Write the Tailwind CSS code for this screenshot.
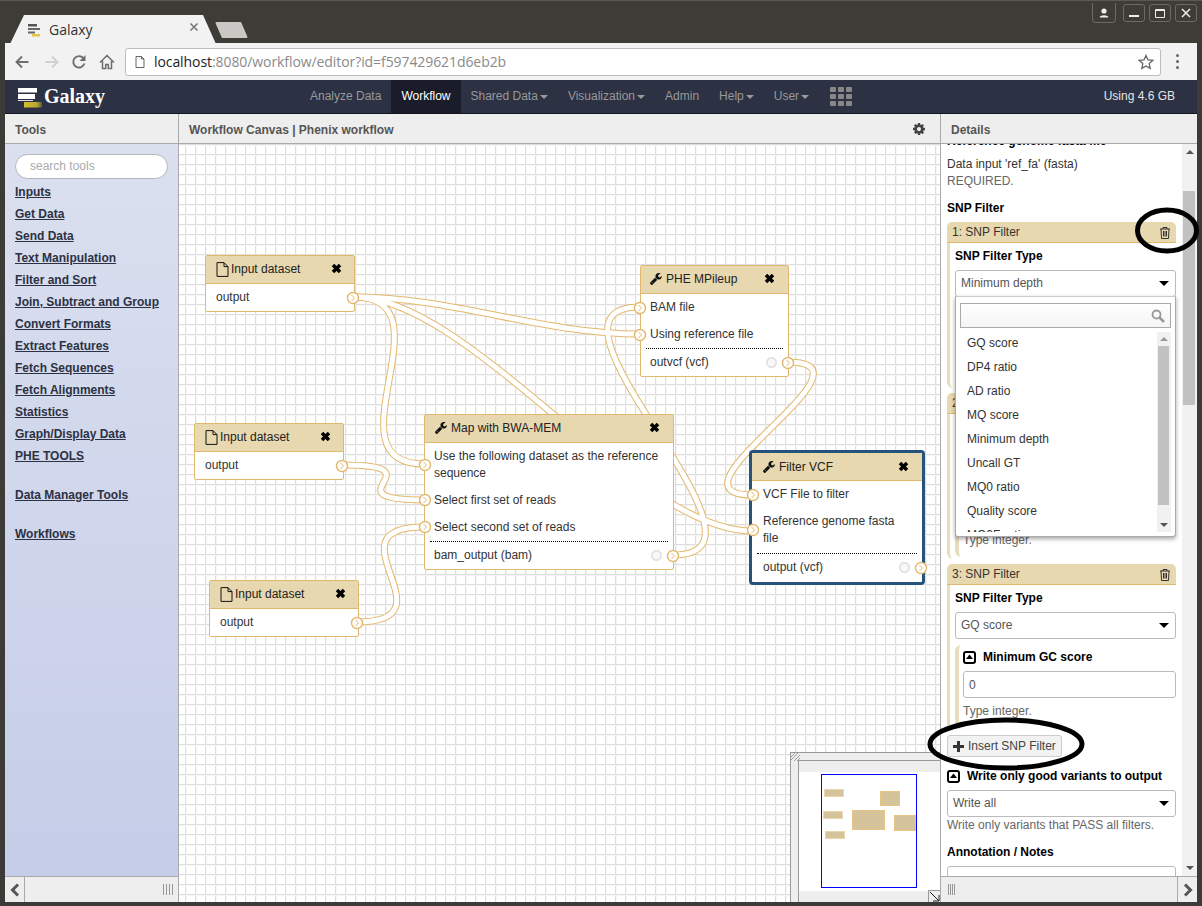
<!doctype html>
<html>
<head>
<meta charset="utf-8">
<title>Galaxy</title>
<script src="https://cdn.jsdelivr.net/npm/@tailwindcss/browser@4"></script>
</head>
<body class="m-0 overflow-hidden bg-[#3c3b37] font-['Liberation_Sans',Arial,sans-serif] text-[12px] leading-[17px] text-[#333]">
<div class="relative w-[1202px] h-[906px] overflow-hidden flex flex-col">

  <!-- window title / tab strip -->
  <div class="relative h-[43px] shrink-0 bg-[#3d3c37] border-t border-[#5a5954]">
    <div class="absolute left-[10px] top-[14px] w-[206px] h-[29px] bg-[#f2f2f2] [clip-path:polygon(14px_0,193px_0,206px_100%,0_100%)] flex items-center">
      <svg class="ml-[17px] mt-[1px]" width="14" height="14" viewBox="0 0 14 14"><rect x="1" y="1" width="9" height="2.5" fill="#555"/><rect x="1" y="5" width="12" height="2" fill="#666"/><rect x="1" y="8.5" width="7" height="2" fill="#666"/><rect x="5" y="11" width="8" height="2.5" fill="#e3c73c"/></svg>
      <span class="ml-[8px] font-['Open_Sans',sans-serif] text-[14px] text-[#333]">Galaxy</span>
      <span class="absolute left-[179px] top-[7px] text-[#777]"><svg width="10" height="10" viewBox="0 0 10 10"><path d="M1.5 1.5l7 7M8.5 1.5l-7 7" stroke="#777" stroke-width="1.6"/></svg></span>
    </div>
    <div class="absolute left-[215px] top-[21px] w-[33px] h-[16px] bg-[#c9c8c5] rounded-[2px] [clip-path:polygon(0_0,26px_0,33px_100%,7px_100%)]"></div>
    <!-- window controls -->
    <div class="absolute left-[1092px] top-[2px] w-[24px] h-[20px] border border-t-0 border-[#6b6a65] rounded-b-[4px] flex items-center justify-center">
      <svg width="10" height="10" viewBox="0 0 10 10"><circle cx="5" cy="3" r="2.6" fill="#eee"/><path d="M0.5 9.5C1 6.5 9 6.5 9.5 9.5Z" fill="#eee"/></svg>
    </div>
    <div class="absolute left-[1123px] top-[3px] flex gap-[4px]">
      <div class="w-[22px] h-[18px] border border-[#6b6a65] rounded-[3px] flex items-center justify-center"><div class="w-[10px] h-[2px] mt-[5px] bg-[#eee]"></div></div>
      <div class="w-[22px] h-[18px] border border-[#6b6a65] rounded-[3px] flex items-center justify-center"><div class="w-[10px] h-[9px] border border-t-2 border-[#eee] rounded-[1px]"></div></div>
      <div class="w-[22px] h-[18px] border border-[#6b6a65] rounded-[3px] flex items-center justify-center"><svg width="10" height="10" viewBox="0 0 10 10"><path d="M1 1l8 8M9 1l-8 8" stroke="#eee" stroke-width="1.5"/></svg></div>
    </div>
  </div>

  <div class="flex-1 min-h-0 flex flex-col ml-[5px] mr-[5px] mb-[4px]">
    <!-- browser toolbar -->
    <div class="h-[37px] shrink-0 bg-[#f2f2f2] flex items-center relative">
      <svg class="ml-[9px]" width="16" height="16" viewBox="0 0 16 16"><path d="M14.5 8H2.5M8 2.5L2.5 8 8 13.5" fill="none" stroke="#6e6e6e" stroke-width="1.9"/></svg>
      <svg class="ml-[14px]" width="16" height="16" viewBox="0 0 16 16"><path d="M1.5 8h12M8 2.5L13.5 8 8 13.5" fill="none" stroke="#d0d0d0" stroke-width="1.9"/></svg>
      <svg class="ml-[11px]" width="16" height="16" viewBox="0 0 16 16"><path d="M13.4 9.5A5.7 5.7 0 1 1 12.2 4" fill="none" stroke="#6e6e6e" stroke-width="1.9"/><path d="M14.5 1v6h-6z" fill="#6e6e6e"/></svg>
      <svg class="ml-[12px]" width="16" height="16" viewBox="0 0 16 16"><path d="M1 8.5L8 1.5l7 7M3.5 7v7.500h3.200v-4h2.600v4h3.200V7" fill="none" stroke="#6e6e6e" stroke-width="1.5"/></svg>
      <div class="ml-[10px] w-[1036px] h-[28px] bg-white border border-[#bdbdbd] rounded-[3px] flex items-center relative">
        <svg class="ml-[9px]" width="10" height="12" viewBox="0 0 10 12"><path d="M1 .5h5.5L9 3v8.5H1zM6.5.5V3H9" fill="none" stroke="#666"/></svg>
        <span class="ml-[9px] mb-[1px] font-['Open_Sans',sans-serif] text-[14px] tracking-[-0.08px] text-[#8a8a8a]"><span class="text-[#222]">localhost</span>:8080/workflow/editor?id=f597429621d6eb2b</span>
        <svg class="absolute right-[6px] top-[5px]" width="16" height="16" viewBox="0 0 16 16"><path d="M8 1.4l2 4.5 4.800.5-3.600 3.200 1 4.800L8 12l-4.200 2.400 1-4.800L1.200 6.400 6 5.900z" fill="none" stroke="#666" stroke-width="1.3"/></svg>
      </div>
      <div class="ml-[15px] flex flex-col gap-[3px]"><i class="block w-[3px] h-[3px] rounded-full bg-[#666]"></i><i class="block w-[3px] h-[3px] rounded-full bg-[#666]"></i><i class="block w-[3px] h-[3px] rounded-full bg-[#666]"></i></div>
    </div>

    <!-- galaxy navbar -->
    <div class="h-[34px] shrink-0 bg-[#2c3143] border-b border-[#14161f] flex items-stretch">
      <div class="w-[295px] shrink-0 flex items-center pl-[13px]">
        <svg width="25" height="26" viewBox="0 0 25 26"><defs><linearGradient id="lg"><stop offset="0" stop-color="#d4bf2a"/><stop offset="0.7" stop-color="#b9a832"/><stop offset="1" stop-color="#5a5a3a"/></linearGradient></defs><rect y="4" width="19" height="4.500" fill="#fff"/><rect y="10" width="17" height="5" fill="#fff"/><rect y="16" width="15" height="1" fill="#ddd"/><rect x="6" y="18" width="18" height="5.500" fill="url(#lg)"/></svg>
        <span class="ml-[1px] font-['Liberation_Serif',serif] font-bold text-[20px] text-white">Galaxy</span>
      </div>
      <div class="flex items-center px-[10px] text-[#999]">Analyze Data</div>
      <div class="flex items-center px-[10px] bg-[#1a1c29] text-white">Workflow</div>
      <div class="flex items-center px-[10px] text-[#999]">Shared Data<i class="ml-[2px] w-0 h-0 border-x-[4px] border-t-[4px] border-x-transparent border-t-[#999]"></i></div>
      <div class="flex items-center px-[10px] text-[#999]">Visualization<i class="ml-[2px] w-0 h-0 border-x-[4px] border-t-[4px] border-x-transparent border-t-[#999]"></i></div>
      <div class="flex items-center px-[10px] text-[#999]">Admin</div>
      <div class="flex items-center px-[10px] text-[#999]">Help<i class="ml-[2px] w-0 h-0 border-x-[4px] border-t-[4px] border-x-transparent border-t-[#999]"></i></div>
      <div class="flex items-center px-[10px] text-[#999]">User<i class="ml-[2px] w-0 h-0 border-x-[4px] border-t-[4px] border-x-transparent border-t-[#999]"></i></div>
      <div class="flex items-center ml-[11px]">
        <div class="grid grid-cols-3 gap-[2px] w-[22px]">
          <i class="block h-[5px] rounded-[1px] bg-[#888]"></i><i class="block h-[5px] rounded-[1px] bg-[#888]"></i><i class="block h-[5px] rounded-[1px] bg-[#888]"></i>
          <i class="block h-[5px] rounded-[1px] bg-[#888]"></i><i class="block h-[5px] rounded-[1px] bg-[#888]"></i><i class="block h-[5px] rounded-[1px] bg-[#888]"></i>
          <i class="block h-[5px] rounded-[1px] bg-[#888]"></i><i class="block h-[5px] rounded-[1px] bg-[#888]"></i><i class="block h-[5px] rounded-[1px] bg-[#888]"></i>
        </div>
      </div>
      <div class="ml-auto flex items-center pr-[22px] text-[#e6e6e6]">Using 4.6 GB</div>
    </div>

    <!-- three columns -->
    <div class="flex-1 min-h-0 flex">
      <!-- tools -->
      <div class="w-[174px] shrink-0 flex flex-col border-r border-[#aaa]">
        <div class="h-[30px] shrink-0 bg-[#eee] border-b border-[#aaa] flex items-center pl-[10px] pt-[3px] font-bold text-[#555]">Tools</div>
        <div class="flex-1 min-h-0 bg-linear-to-b from-[#dbe0ef] to-[#c5cde8] pl-[10px] pt-[10px] font-bold text-[#2c3143]">
          <div class="w-[153px] h-[25px] rounded-full bg-white border border-[#b5b5b5] flex items-center pl-[14px] font-normal text-[#aaa]">search tools</div>
          <div class="mt-[2px] underline">
            <div class="h-[22px] flex items-center">Inputs</div>
            <div class="h-[22px] flex items-center">Get Data</div>
            <div class="h-[22px] flex items-center">Send Data</div>
            <div class="h-[22px] flex items-center">Text Manipulation</div>
            <div class="h-[22px] flex items-center">Filter and Sort</div>
            <div class="h-[22px] flex items-center">Join, Subtract and Group</div>
            <div class="h-[22px] flex items-center">Convert Formats</div>
            <div class="h-[22px] flex items-center">Extract Features</div>
            <div class="h-[22px] flex items-center">Fetch Sequences</div>
            <div class="h-[22px] flex items-center">Fetch Alignments</div>
            <div class="h-[22px] flex items-center">Statistics</div>
            <div class="h-[22px] flex items-center">Graph/Display Data</div>
            <div class="h-[22px] flex items-center">PHE TOOLS</div>
            <div class="h-[22px] flex items-center mt-[17px]">Data Manager Tools</div>
            <div class="h-[22px] flex items-center mt-[17px]">Workflows</div>
          </div>
        </div>
        <div class="h-[26px] shrink-0 bg-[#eee] border-t border-[#aaa] flex items-center">
          <div class="w-[20px] h-full border-r border-[#aaa] flex items-center justify-center">
            <svg width="10" height="14" viewBox="0 0 10 14"><path d="M8 1.500L2.500 7 8 12.500" fill="none" stroke="#555" stroke-width="3"/></svg>
          </div>
          <div class="ml-auto mr-[5px] flex gap-[1px]"><i class="block w-px h-[11px] bg-[#999]"></i><i class="block w-px h-[11px] bg-[#999] ml-px"></i><i class="block w-px h-[11px] bg-[#999] ml-px"></i><i class="block w-px h-[11px] bg-[#999] ml-px"></i></div>
        </div>
      </div>

      <!-- canvas column -->
      <div class="w-[761px] shrink-0 flex flex-col border-r-0">
        <div class="h-[30px] shrink-0 bg-[#eee] border-b border-[#aaa] flex items-center pl-[10px] pr-[14px] pt-[3px] font-bold text-[#555]">
          <span>Workflow Canvas | Phenix workflow</span>
          <svg class="ml-auto mb-[3px]" width="14" height="14" viewBox="0 0 1792 1792"><path fill="#444" d="M1152 896q0-106-75-181t-181-75-181 75-75 181 75 181 181 75 181-75 75-181zm512-109v222q0 12-8 23t-20 13l-185 28q-19 54-39 91 35 50 107 138 10 12 10 25t-9 23q-27 37-99 108t-94 71q-12 0-26-9l-138-108q-44 23-91 38-16 136-29 186-7 28-36 28h-222q-14 0-24.5-8.5t-11.5-21.5l-28-184q-49-16-90-37l-141 107q-10 9-25 9-14 0-25-11-126-114-165-168-7-10-7-23 0-12 8-23 15-21 51-66.5t54-70.5q-27-50-41-99l-183-27q-13-2-21-12.5t-8-23.5v-222q0-12 8-23t19-13l186-28q14-46 39-92-40-57-107-138-10-12-10-24 0-10 9-23 26-36 98.5-107.5t94.5-71.5q13 0 26 10l138 107q44-23 91-38 16-136 29-186 7-28 36-28h222q14 0 24.5 8.5t11.5 21.5l28 184q49 16 90 37l142-107q9-9 24-9 13 0 25 10 129 119 165 170 7 8 7 22 0 12-8 23-15 21-51 66.5t-54 70.5q26 50 41 98l183 28q13 2 21 12.5t8 23.5z"/></svg>
        </div>
        <div class="relative flex-1 min-h-0 overflow-hidden bg-white bg-[linear-gradient(#dedede_1px,#f6f6f6_1px,#f6f6f6_2px,transparent_2px),linear-gradient(90deg,#dedede_1px,#f6f6f6_1px,#f6f6f6_2px,transparent_2px)] bg-[size:10px_10px] bg-[position:6px_0px]">
          <!-- wires -->
          <svg class="absolute left-0 top-0" width="761" height="758" viewBox="179 144 761 758" fill="none">
            <g stroke="#e3b86c" stroke-width="7">
              <path d="M354 297C454 297 324 464 424 464"/>
              <path d="M354 297C454 297 540 334 640 334"/>
              <path d="M354 297C471 297 635 531 752 531"/>
              <path d="M343 465C443 465 324 500 424 500"/>
              <path d="M357 622C457 622 324 527 424 527"/>
              <path d="M673 555C797 555 516 307 640 307"/>
              <path d="M788 362C888 362 653 495 753 495"/>
            </g>
            <g stroke="#fff" stroke-width="5">
              <path d="M354 297C454 297 324 464 424 464"/>
              <path d="M354 297C454 297 540 334 640 334"/>
              <path d="M354 297C471 297 635 531 752 531"/>
              <path d="M343 465C443 465 324 500 424 500"/>
              <path d="M357 622C457 622 324 527 424 527"/>
              <path d="M673 555C797 555 516 307 640 307"/>
              <path d="M788 362C888 362 653 495 753 495"/>
            </g>
          </svg>

          <!-- Input dataset 1 -->
          <div class="absolute left-[26px] top-[111px] w-[150px] bg-white border border-[#e0b870] rounded-[2px]">
            <div class="h-[28px] bg-[#e8d8b0] border-b border-[#e0b870] flex items-center pl-[10px] text-[#222]">
              <svg width="13" height="15" viewBox="0 0 13 15"><path d="M1 .6h7l4 4v9.800H1zM8 .6v4h4" fill="none" stroke="#111"/></svg>
              <span class="ml-[2px]">Input dataset</span>
              <svg class="absolute right-[12px] top-[7px]" width="11" height="11" viewBox="0 0 11 11"><path d="M2 2l7 7M9 2l-7 7" stroke="#000" stroke-width="3.500"/></svg>
            </div>
            <div class="p-[5px] pl-[10px]">output</div>
            <svg class="absolute right-[-6px] top-[35px]" width="14" height="14" viewBox="0 0 14 14"><circle cx="7" cy="7" r="5.500" fill="#fff" stroke="#e3b86c" stroke-width="1.400"/><path d="M5.500 4l3 3-3 3" fill="none" stroke="#e3b86c"/></svg>
          </div>

          <!-- Input dataset 2 -->
          <div class="absolute left-[15px] top-[279px] w-[150px] bg-white border border-[#e0b870] rounded-[2px]">
            <div class="h-[28px] bg-[#e8d8b0] border-b border-[#e0b870] flex items-center pl-[10px] text-[#222]">
              <svg width="13" height="15" viewBox="0 0 13 15"><path d="M1 .6h7l4 4v9.800H1zM8 .6v4h4" fill="none" stroke="#111"/></svg>
              <span class="ml-[2px]">Input dataset</span>
              <svg class="absolute right-[12px] top-[7px]" width="11" height="11" viewBox="0 0 11 11"><path d="M2 2l7 7M9 2l-7 7" stroke="#000" stroke-width="3.500"/></svg>
            </div>
            <div class="p-[5px] pl-[10px]">output</div>
            <svg class="absolute right-[-6px] top-[35px]" width="14" height="14" viewBox="0 0 14 14"><circle cx="7" cy="7" r="5.500" fill="#fff" stroke="#e3b86c" stroke-width="1.400"/><path d="M5.500 4l3 3-3 3" fill="none" stroke="#e3b86c"/></svg>
          </div>

          <!-- Input dataset 3 -->
          <div class="absolute left-[30px] top-[436px] w-[150px] bg-white border border-[#e0b870] rounded-[2px]">
            <div class="h-[28px] bg-[#e8d8b0] border-b border-[#e0b870] flex items-center pl-[10px] text-[#222]">
              <svg width="13" height="15" viewBox="0 0 13 15"><path d="M1 .6h7l4 4v9.800H1zM8 .6v4h4" fill="none" stroke="#111"/></svg>
              <span class="ml-[2px]">Input dataset</span>
              <svg class="absolute right-[12px] top-[7px]" width="11" height="11" viewBox="0 0 11 11"><path d="M2 2l7 7M9 2l-7 7" stroke="#000" stroke-width="3.500"/></svg>
            </div>
            <div class="p-[5px] pl-[10px]">output</div>
            <svg class="absolute right-[-6px] top-[35px]" width="14" height="14" viewBox="0 0 14 14"><circle cx="7" cy="7" r="5.500" fill="#fff" stroke="#e3b86c" stroke-width="1.400"/><path d="M5.500 4l3 3-3 3" fill="none" stroke="#e3b86c"/></svg>
          </div>

          <!-- PHE MPileup -->
          <div class="absolute left-[461px] top-[121px] w-[149px] bg-white border border-[#e0b870] rounded-[2px]">
            <div class="h-[28px] bg-[#e8d8b0] border-b border-[#e0b870] flex items-center pl-[9px] text-[#222]">
              <svg width="13" height="13" viewBox="0 0 1792 1792"><path fill="#111" d="M363 1344q0-26-19-45t-45-19-45 19-19 45 19 45 45 19 45-19 19-45zm644-420l-682 682q-37 37-90 37-52 0-91-37l-106-108q-38-36-38-90 0-53 38-91l681-681q39 98 114.5 173.5t173.5 114.5zm634-435q0 39-23 106-47 134-164.5 217.5t-258.5 83.5q-185 0-316.5-131.5t-131.5-316.5 131.5-316.5 316.5-131.5q58 0 121.5 16.5t107.5 46.5q16 11 16 28t-16 28l-293 169v224l193 107q5-3 79-48.5t135.5-81 70.5-35.5q15 0 23.5 10t8.5 25z"/></svg>
              <span class="ml-[3px]">PHE MPileup</span>
              <svg class="absolute right-[13px] top-[7px]" width="11" height="11" viewBox="0 0 11 11"><path d="M2 2l7 7M9 2l-7 7" stroke="#000" stroke-width="3.500"/></svg>
            </div>
            <div class="p-[5px]">
              <div class="pl-[4px] mb-[10px] relative">BAM file<svg class="absolute left-[-13px] top-[2px]" width="14" height="14" viewBox="0 0 14 14"><circle cx="7" cy="7" r="5.500" fill="#fff" stroke="#e3b86c" stroke-width="1.400"/><path d="M5.500 4l3 3-3 3" fill="none" stroke="#e3b86c"/></svg></div>
              <div class="pl-[4px] relative">Using reference file<svg class="absolute left-[-13px] top-[2px]" width="14" height="14" viewBox="0 0 14 14"><circle cx="7" cy="7" r="5.500" fill="#fff" stroke="#e3b86c" stroke-width="1.400"/><path d="M5.500 4l3 3-3 3" fill="none" stroke="#e3b86c"/></svg></div>
              <div class="mt-[5px] mb-[5px] border-t border-dotted border-black"></div>
              <div class="pl-[4px] relative">outvcf (vcf)
                <svg class="absolute right-[6px] top-[3px]" width="11" height="11" viewBox="0 0 11 11"><path d="M3.500 1h4l2.500 2.500v4L7.500 10h-4L1 7.500v-4z" fill="#f8f8f8" stroke="#ddd" stroke-width="1.400"/></svg>
                <svg class="absolute right-[-12px] top-[2px]" width="14" height="14" viewBox="0 0 14 14"><circle cx="7" cy="7" r="5.500" fill="#fff" stroke="#e3b86c" stroke-width="1.400"/><path d="M5.500 4l3 3-3 3" fill="none" stroke="#e3b86c"/></svg>
              </div>
            </div>
          </div>

          <!-- Map with BWA-MEM -->
          <div class="absolute left-[245px] top-[270px] w-[250px] bg-white border border-[#e0b870] rounded-[2px]">
            <div class="h-[28px] bg-[#e8d8b0] border-b border-[#e0b870] flex items-center pl-[10px] text-[#222]">
              <svg width="13" height="13" viewBox="0 0 1792 1792"><path fill="#111" d="M363 1344q0-26-19-45t-45-19-45 19-19 45 19 45 45 19 45-19 19-45zm644-420l-682 682q-37 37-90 37-52 0-91-37l-106-108q-38-36-38-90 0-53 38-91l681-681q39 98 114.5 173.5t173.5 114.5zm634-435q0 39-23 106-47 134-164.5 217.5t-258.5 83.5q-185 0-316.5-131.5t-131.5-316.5 131.5-316.5 316.5-131.5q58 0 121.5 16.5t107.5 46.5q16 11 16 28t-16 28l-293 169v224l193 107q5-3 79-48.5t135.5-81 70.5-35.5q15 0 23.5 10t8.5 25z"/></svg>
              <span class="ml-[3px]">Map with BWA-MEM</span>
              <svg class="absolute right-[13px] top-[7px]" width="11" height="11" viewBox="0 0 11 11"><path d="M2 2l7 7M9 2l-7 7" stroke="#000" stroke-width="3.500"/></svg>
            </div>
            <div class="p-[5px]">
              <div class="pl-[4px] pr-[3px] mb-[10px] relative">Use the following dataset as the reference sequence<svg class="absolute left-[-12px] top-[10px]" width="14" height="14" viewBox="0 0 14 14"><circle cx="7" cy="7" r="5.500" fill="#fff" stroke="#e3b86c" stroke-width="1.400"/><path d="M5.500 4l3 3-3 3" fill="none" stroke="#e3b86c"/></svg></div>
              <div class="pl-[4px] mb-[10px] relative">Select first set of reads<svg class="absolute left-[-12px] top-[1px]" width="14" height="14" viewBox="0 0 14 14"><circle cx="7" cy="7" r="5.500" fill="#fff" stroke="#e3b86c" stroke-width="1.400"/><path d="M5.500 4l3 3-3 3" fill="none" stroke="#e3b86c"/></svg></div>
              <div class="pl-[4px] relative">Select second set of reads<svg class="absolute left-[-12px] top-[1px]" width="14" height="14" viewBox="0 0 14 14"><circle cx="7" cy="7" r="5.500" fill="#fff" stroke="#e3b86c" stroke-width="1.400"/><path d="M5.500 4l3 3-3 3" fill="none" stroke="#e3b86c"/></svg></div>
              <div class="mt-[5px] mb-[5px] border-t border-dotted border-black"></div>
              <div class="pl-[4px] relative">bam_output (bam)
                <svg class="absolute right-[6px] top-[3px]" width="11" height="11" viewBox="0 0 11 11"><path d="M3.500 1h4l2.500 2.500v4L7.500 10h-4L1 7.500v-4z" fill="#f8f8f8" stroke="#ddd" stroke-width="1.400"/></svg>
                <svg class="absolute right-[-12px] top-[2px]" width="14" height="14" viewBox="0 0 14 14"><circle cx="7" cy="7" r="5.500" fill="#fff" stroke="#e3b86c" stroke-width="1.400"/><path d="M5.500 4l3 3-3 3" fill="none" stroke="#e3b86c"/></svg>
              </div>
            </div>
          </div>

          <!-- Filter VCF -->
          <div class="absolute left-[570px] top-[306px] w-[176px] bg-white border-[3px] border-[#25537b] rounded-[4px]">
            <div class="h-[28px] bg-[#e8d8b0] border-b border-[#e0b870] flex items-center pl-[11px] pt-[1px] text-[#222]">
              <svg width="13" height="13" viewBox="0 0 1792 1792"><path fill="#111" d="M363 1344q0-26-19-45t-45-19-45 19-19 45 19 45 45 19 45-19 19-45zm644-420l-682 682q-37 37-90 37-52 0-91-37l-106-108q-38-36-38-90 0-53 38-91l681-681q39 98 114.5 173.5t173.5 114.5zm634-435q0 39-23 106-47 134-164.5 217.5t-258.5 83.5q-185 0-316.5-131.5t-131.5-316.5 131.5-316.5 316.5-131.5q58 0 121.5 16.5t107.5 46.5q16 11 16 28t-16 28l-293 169v224l193 107q5-3 79-48.5t135.5-81 70.5-35.5q15 0 23.5 10t8.5 25z"/></svg>
              <span class="ml-[3px]">Filter VCF</span>
              <svg class="absolute right-[13px] top-[8px]" width="11" height="11" viewBox="0 0 11 11"><path d="M2 2l7 7M9 2l-7 7" stroke="#000" stroke-width="3.500"/></svg>
            </div>
            <div class="p-[5px] pb-[6px]">
              <div class="pl-[6px] mb-[10px] relative">VCF File to filter<svg class="absolute left-[-11px] top-[2px]" width="14" height="14" viewBox="0 0 14 14"><circle cx="7" cy="7" r="5.500" fill="#fff" stroke="#e3b86c" stroke-width="1.400"/><path d="M5.500 4l3 3-3 3" fill="none" stroke="#e3b86c"/></svg></div>
              <div class="pl-[6px] pr-[10px] relative">Reference genome fasta file<svg class="absolute left-[-11px] top-[10px]" width="14" height="14" viewBox="0 0 14 14"><circle cx="7" cy="7" r="5.500" fill="#fff" stroke="#e3b86c" stroke-width="1.400"/><path d="M5.500 4l3 3-3 3" fill="none" stroke="#e3b86c"/></svg></div>
              <div class="mt-[6px] mb-[5px] border-t border-dotted border-black"></div>
              <div class="pl-[6px] relative">output (vcf)
                <svg class="absolute right-[7px] top-[3px]" width="11" height="11" viewBox="0 0 11 11"><path d="M3.500 1h4l2.500 2.500v4L7.500 10h-4L1 7.500v-4z" fill="#f8f8f8" stroke="#ddd" stroke-width="1.400"/></svg>
                <svg class="absolute right-[-11px] top-[2px]" width="14" height="14" viewBox="0 0 14 14"><circle cx="7" cy="7" r="5.500" fill="#fff" stroke="#e3b86c" stroke-width="1.400"/><path d="M5.500 4l3 3-3 3" fill="none" stroke="#e3b86c"/></svg>
              </div>
            </div>
          </div>

          <!-- overview -->
          <div class="absolute right-0 bottom-0 w-[150px] h-[150px] bg-[#eee] border-l border-t border-[#999]">
            <svg class="absolute left-0 top-0" width="9" height="8" viewBox="0 0 9 8"><path d="M0 4l4-4M0 7l7-7M3 8l6-6M6 8l3-3" stroke="#888" stroke-width=".8"/></svg>
            <div class="absolute left-[7px] top-[7px] right-0 bottom-0 border-l border-t border-[#999] bg-[#eee]">
              <div class="absolute left-0 right-0 top-[11px] bottom-[11px] bg-white">
                <div class="absolute left-[22px] top-[2px] w-[96px] h-[114px] border border-[#00f]"></div>
                <div class="absolute left-[25px] top-[17px] w-[20px] h-[8px] bg-[#d5c39c] border border-[#ecd7ad]"></div>
                <div class="absolute left-[81px] top-[19px] w-[20px] h-[15px] bg-[#d5c39c] border border-[#e6c585]"></div>
                <div class="absolute left-[24px] top-[39px] w-[20px] h-[8px] bg-[#d5c39c] border border-[#ecd7ad]"></div>
                <div class="absolute left-[53px] top-[38px] w-[33px] h-[20px] bg-[#d5c39c] border border-[#e6c585]"></div>
                <div class="absolute left-[95px] top-[43px] w-[22px] h-[16px] bg-[#d5c39c] border border-[#e6c585]"></div>
                <div class="absolute left-[26px] top-[59px] w-[20px] h-[8px] bg-[#d5c39c] border border-[#ecd7ad]"></div>
              </div>
              <div class="absolute right-0 bottom-0 w-[12px] h-[12px] border-l border-t border-[#999]">
                <svg width="11" height="11" viewBox="0 0 11 11"><path d="M1 1l9 9M10 4v6H4" fill="none" stroke="#222"/></svg>
              </div>
            </div>
          </div>
        </div>
      </div>

      <!-- details -->
      <div class="flex-1 min-w-0 flex flex-col border-l border-[#aaa]">
        <div class="h-[30px] shrink-0 bg-[#eee] border-b border-[#aaa] flex items-center pl-[10px] pt-[3px] font-bold text-[#555]">Details</div>
        <div class="relative flex-1 min-h-0 flex overflow-hidden bg-white">
          <div class="flex-1 min-w-0 pl-[6px] pr-[6px] text-[#333]">
            <div class="-mt-[11px] font-bold text-black">Reference genome fasta file</div>
            <div class="mt-[6px]">Data input 'ref_fa' (fasta)</div>
            <div class="text-[#666]">REQUIRED.</div>
            <div class="mt-[10px] font-bold text-black">SNP Filter</div>

            <!-- 1 -->
            <div class="mt-[5px] h-[166px]">
              <div class="h-[21px] rounded-t-[5px] bg-[#e8d8b0] border-b border-[#e0b870] flex items-center justify-between pl-[5px] pr-[5px]">
                <span>1: SNP Filter</span>
                <svg width="12" height="13" viewBox="0 0 12 13" fill="none" stroke="#333"><path d="M1 3h10M4 3V1.500h4V3M2 3l.5 9.500h7L10 3M4.500 5v5.500M6 5v5.500M7.500 5v5.500"/></svg>
              </div>
              <div class="h-[145px] border-l-[3px] border-[#e8dcbc] rounded-bl-[6px] pl-[5px]">
                <div class="pt-[5px] font-bold text-black">SNP Filter Type</div>
                <div class="mt-[5px] h-[27px] border border-[#bbb] rounded-[3px] flex items-center justify-between pl-[5px] pr-[6px] text-[#555]">Minimum depth<i class="w-0 h-0 border-x-[5px] border-t-[5px] border-x-transparent border-t-black"></i></div>
              </div>
            </div>

            <!-- 2 -->
            <div class="mt-[5px] h-[166px]">
              <div class="h-[21px] rounded-t-[5px] bg-[#e8d8b0] border-b border-[#e0b870] flex items-center pl-[5px]">2: SNP Filter</div>
              <div class="h-[145px] border-l-[3px] border-[#e8dcbc] rounded-bl-[6px] pl-[5px] pt-[118px]">
                <div class="border-l-[4px] border-[#e8dcbc] rounded-bl-[6px] pl-[4px] text-[#666] pb-[8px]">Type integer.</div>
              </div>
            </div>

            <!-- 3 -->
            <div class="mt-[5px] h-[166px]">
              <div class="h-[21px] rounded-t-[5px] bg-[#e8d8b0] border-b border-[#e0b870] flex items-center justify-between pl-[5px] pr-[5px]">
                <span>3: SNP Filter</span>
                <svg width="12" height="13" viewBox="0 0 12 13" fill="none" stroke="#333"><path d="M1 3h10M4 3V1.500h4V3M2 3l.5 9.500h7L10 3M4.500 5v5.500M6 5v5.500M7.500 5v5.500"/></svg>
              </div>
              <div class="h-[145px] border-l-[3px] border-[#e8dcbc] rounded-bl-[6px] pl-[5px]">
                <div class="pt-[5px] font-bold text-black">SNP Filter Type</div>
                <div class="mt-[5px] h-[27px] border border-[#bbb] rounded-[3px] flex items-center justify-between pl-[5px] pr-[6px] text-[#555]">GQ score<i class="w-0 h-0 border-x-[5px] border-t-[5px] border-x-transparent border-t-black"></i></div>
                <div class="mt-[6px] border-l-[4px] border-[#e8dcbc] rounded-l-[6px] pl-[4px] pt-[4px] pb-[9px]">
                  <div class="flex items-center font-bold text-black">
                    <svg width="13" height="13" viewBox="0 0 13 13"><rect x="1" y="1" width="11" height="11" rx="2" fill="#fff" stroke="#000" stroke-width="2"/><path d="M6.500 3.500L10 8H3z" fill="#000"/></svg>
                    <span class="ml-[7px]">Minimum GC score</span>
                  </div>
                  <div class="mt-[5px] h-[27px] border border-[#bbb] rounded-[3px] flex items-center pl-[5px] pt-[1px] text-[#555]">0</div>
                  <div class="mt-[5px] text-[#666]">Type integer.</div>
                </div>
              </div>
            </div>

            <div class="mt-[5px] w-[115px] h-[22px] bg-[#f2f2f2] border border-[#ccc] rounded-[3px] flex items-center pl-[5px] text-[#444]">
              <svg width="11" height="11" viewBox="0 0 11 11"><path d="M5.500 0v11M0 5.500h11" stroke="#333" stroke-width="3"/></svg>
              <span class="ml-[4px]">Insert SNP Filter</span>
            </div>
            <div class="mt-[11px] flex items-center font-bold text-black">
              <svg width="13" height="13" viewBox="0 0 13 13"><rect x="1" y="1" width="11" height="11" rx="2" fill="#fff" stroke="#000" stroke-width="2"/><path d="M6.500 3.500L10 8H3z" fill="#000"/></svg>
              <span class="ml-[7px]">Write only good variants to output</span>
            </div>
            <div class="mt-[5px] h-[27px] border border-[#bbb] rounded-[3px] flex items-center justify-between pl-[5px] pr-[6px] text-[#555]">Write all<i class="w-0 h-0 border-x-[5px] border-t-[5px] border-x-transparent border-t-black"></i></div>
            <div class="text-[#666]">Write only variants that PASS all filters.</div>
            <div class="mt-[10px] font-bold text-black">Annotation / Notes</div>
            <div class="mt-[5px] h-[40px] border border-[#bbb] rounded-[3px]"></div>
          </div>

          <!-- scrollbar -->
          <div class="relative w-[15px] shrink-0 bg-[#f1f1f1]">
            <i class="absolute left-[4px] top-[6px] w-0 h-0 border-x-[4px] border-b-[4px] border-x-transparent border-b-[#555]"></i>
            <div class="absolute left-[1px] right-[2px] top-[47px] h-[214px] bg-[#c1c1c1]"></div>
            <i class="absolute left-[4px] bottom-[6px] w-0 h-0 border-x-[4px] border-t-[4px] border-x-transparent border-t-[#555]"></i>
          </div>

          <!-- open dropdown -->
          <div class="absolute left-[14px] top-[152px] w-[221px] h-[241px] bg-white border border-[#aaa] border-t-[#ccc] rounded-b-[3px] shadow-[0_2px_4px_rgba(0,0,0,0.35)]">
            <div class="absolute left-[4px] top-[6px] w-[211px] h-[25px] border border-[#aaa] bg-linear-to-b from-white to-[#f4f4f4] flex items-center justify-end pr-[5px]">
              <svg width="14" height="14" viewBox="0 0 14 14" fill="none" stroke="#999"><circle cx="5.500" cy="5.500" r="4" stroke-width="1.800"/><path d="M8.500 8.500L13 13" stroke-width="2.500"/></svg>
            </div>
            <div class="absolute left-[1px] right-[18px] top-[34px] h-[201px] overflow-hidden text-[#333]">
              <div class="h-[24px] flex items-center pl-[10px]">GQ score</div>
              <div class="h-[24px] flex items-center pl-[10px]">DP4 ratio</div>
              <div class="h-[24px] flex items-center pl-[10px]">AD ratio</div>
              <div class="h-[24px] flex items-center pl-[10px]">MQ score</div>
              <div class="h-[24px] flex items-center pl-[10px]">Minimum depth</div>
              <div class="h-[24px] flex items-center pl-[10px]">Uncall GT</div>
              <div class="h-[24px] flex items-center pl-[10px]">MQ0 ratio</div>
              <div class="h-[24px] flex items-center pl-[10px]">Quality score</div>
              <div class="h-[24px] flex items-center pl-[10px]">MQ0F ratio</div>
            </div>
            <div class="absolute right-[4px] top-[35px] w-[14px] h-[200px] bg-[#f1f1f1]">
              <i class="absolute left-[3px] top-[5px] w-0 h-0 border-x-[4px] border-b-[4px] border-x-transparent border-b-[#999]"></i>
              <div class="absolute left-[1px] right-[2px] top-[14px] h-[159px] bg-[#c1c1c1]"></div>
              <i class="absolute left-[3px] bottom-[5px] w-0 h-0 border-x-[4px] border-t-[4px] border-x-transparent border-t-[#555]"></i>
            </div>
          </div>
        </div>
        <div class="h-[26px] shrink-0 bg-[#eee] border-t border-[#aaa] flex items-center">
          <div class="ml-[7px] flex"><i class="block w-px h-[11px] bg-[#999]"></i><i class="block w-px h-[11px] bg-[#999] ml-px"></i><i class="block w-px h-[11px] bg-[#999] ml-px"></i><i class="block w-px h-[11px] bg-[#999] ml-px"></i></div>
          <div class="ml-auto w-[20px] h-full border-l border-[#aaa] flex items-center justify-center">
            <svg width="10" height="14" viewBox="0 0 10 14"><path d="M2 1.500L7.500 7 2 12.500" fill="none" stroke="#555" stroke-width="3"/></svg>
          </div>
        </div>
      </div>
    </div>
  </div>

  <!-- hand-drawn annotation circles -->
  <svg class="absolute left-0 top-0 pointer-events-none" width="1202" height="906" viewBox="0 0 1202 906" fill="none" stroke="#000" stroke-width="5">
    <ellipse cx="1167" cy="230.500" rx="29.500" ry="20.500"/>
    <ellipse cx="1006" cy="744" rx="76" ry="24"/>
  </svg>
</div>
</body>
</html>
